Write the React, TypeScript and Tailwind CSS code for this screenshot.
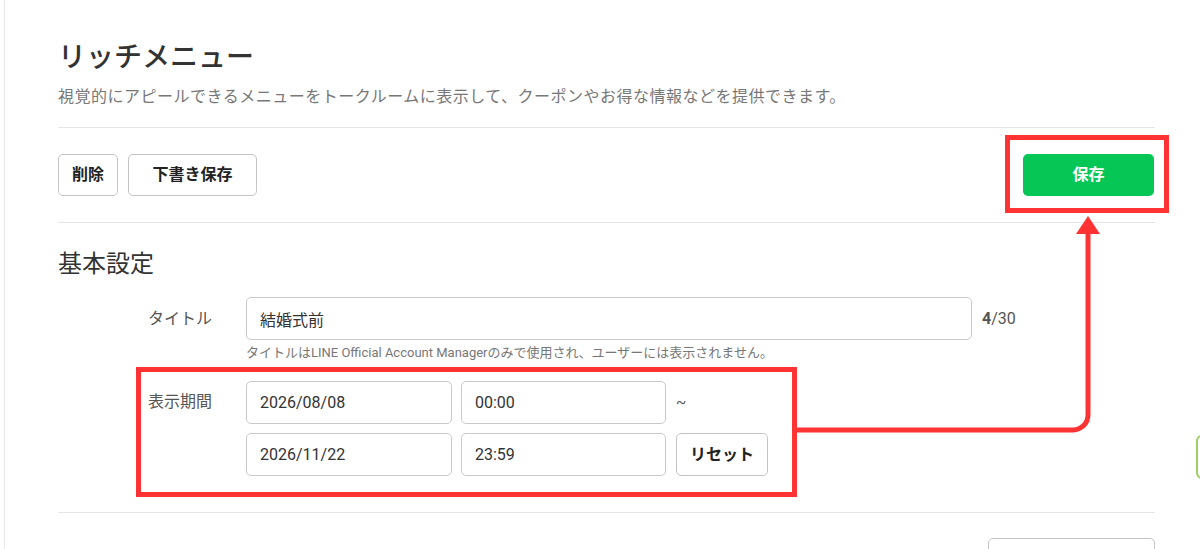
import React from 'react';

const font = { fontFamily: 'Roboto, "Noto Sans CJK JP", sans-serif' };

function Field({ value, className }: { value: string; className: string }) {
  return (
    <input
      readOnly
      value={value}
      className={`h-[43px] rounded-[5px] border border-[#c9c9c9] bg-white px-[13px] text-[16px] text-[#333] outline-none ${className}`}
    />
  );
}

function OutlineButton({ children, className }: { children: React.ReactNode; className: string }) {
  return (
    <button className={`h-[42px] rounded-[5px] border border-[#c4c4c4] bg-white text-[16px] font-bold text-[#222] ${className}`}>
      {children}
    </button>
  );
}

export default function App() {
  return (
    <div className="relative h-[549px] w-[1200px] overflow-hidden bg-white" style={font}>
      <div className="ml-[4px] h-full border-l border-[#e8e8e8] pl-[53px] pr-[45px] pt-[38px]">
        <h1 className="text-[28px] leading-[40px] font-medium text-[#333]">リッチメニュー</h1>
        <p className="mt-[7px] text-[16px] leading-[24px] tracking-[0.5px] text-[#777]">
          視覚的にアピールできるメニューをトークルームに表示して、クーポンやお得な情報などを提供できます。
        </p>
        <div className="mt-[18px] border-t border-[#e6e6e6]" />

        <div className="mt-[26px] flex items-center justify-between">
          <div className="flex gap-[10px]">
            <OutlineButton className="w-[60px]">削除</OutlineButton>
            <OutlineButton className="w-[129px]">下書き保存</OutlineButton>
          </div>
          <button className="mr-[1px] h-[42px] w-[131px] rounded-[5px] bg-[#06c755] text-[16px] font-bold text-white">
            保存
          </button>
        </div>
        <div className="mt-[26px] border-t border-[#e6e6e6]" />

        <h2 className="mt-[25px] text-[24px] leading-[32px] font-normal text-[#333]">基本設定</h2>

        <div className="mt-[17px] flex items-center pl-[90px]">
          <div className="w-[98px] text-[16px] text-[#555]">タイトル</div>
          <Field value="結婚式前" className="w-[726px]" />
          <div className="ml-[10px] text-[16px] text-[#555]">
            <span className="font-bold">4</span>/30
          </div>
        </div>
        <p className="mt-[4px] pl-[188px] text-[13px] leading-[18px] text-[#777]">
          タイトルはLINE Official Account Managerのみで使用され、ユーザーには表示されません。
        </p>

        <div className="mt-[19px] flex pl-[90px]">
          <div className="w-[98px] pt-[9px] text-[16px] text-[#555]">表示期間</div>
          <div className="flex flex-col gap-[9px]">
            <div className="flex items-center gap-[9px]">
              <Field value="2026/08/08" className="w-[206px]" />
              <Field value="00:00" className="w-[205px]" />
              <span className="ml-[1px] text-[15px] text-[#555]">~</span>
            </div>
            <div className="flex items-center gap-[9px]">
              <Field value="2026/11/22" className="w-[206px]" />
              <Field value="23:59" className="w-[205px]" />
              <OutlineButton className="ml-[1px] h-[43px] w-[92px]">リセット</OutlineButton>
            </div>
          </div>
        </div>

        <div className="mt-[36px] border-t border-[#e6e6e6]" />
        <div className="mt-[25px] flex justify-end">
          <div className="h-[42px] w-[167px] rounded-[5px] border border-[#c4c4c4]" />
        </div>
      </div>

      {/* floating tab at right edge */}
      <div className="absolute left-[1196px] top-[435px] h-[44px] w-[20px] rounded-[6px] border-2 border-[#9fcf63] bg-white" />

      {/* annotations */}
      <div className="absolute left-[1005px] top-[135px] h-[78px] w-[164px] border-[5px] border-[#ff3333]" />
      <div className="absolute left-[136px] top-[367px] h-[130px] w-[661px] border-[5px] border-[#ff3333]" />
      <svg className="pointer-events-none absolute left-0 top-0" width="1200" height="549">
        <path d="M 796 430 H 1073 A 15 15 0 0 0 1088 415 V 231" stroke="#ff3333" strokeWidth="5" fill="none" />
        <polygon points="1076,234 1100,234 1088,216" fill="#ff3333" />
      </svg>
    </div>
  );
}
